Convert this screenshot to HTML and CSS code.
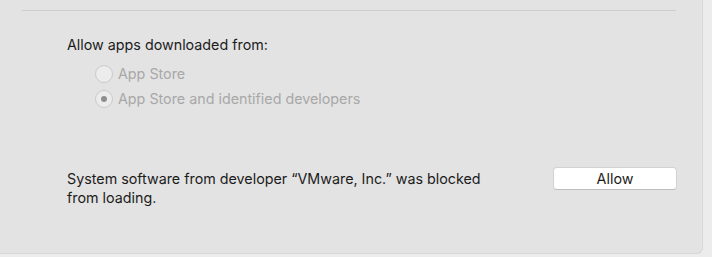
FILE: index.html
```
<!DOCTYPE html>
<html lang="en">
<head>
  <meta charset="UTF-8">
  <title>Security &amp; Privacy</title>
  <link rel="stylesheet" href="styles.css">
</head>
<body>
  <div class="panel">
    <div class="divider"></div>

    <div class="gatekeeper">
      <p class="label">Allow apps downloaded from:</p>
      <div class="radio-list">
        <label class="radio-row">
          <span class="radio"></span>
          <span>App Store</span>
        </label>
        <label class="radio-row">
          <span class="radio checked"></span>
          <span>App Store and identified developers</span>
        </label>
      </div>
    </div>

    <div class="blocked">
      <p class="blocked-text">System software from developer “VMware, Inc.” was blocked from loading.</p>
      <button class="allow-button">Allow</button>
    </div>
  </div>
</body>
</html>
```

FILE: styles.css
```
body {
  margin: 0;
  background-color: #ececec;
  font-family: Inter, "Liberation Sans", Arial, sans-serif;
  font-size: 14.3px;
  color: #1c1c1c;
}
.panel {
  width: 703px;
  height: 254px;
  background-color: #e3e3e3;
  border-right: 1px solid #d8d8d8;
  border-bottom: 1px solid #d8d8d8;
  border-bottom-right-radius: 6px;
  padding-top: 10px;
  box-sizing: border-box;
}
.divider {
  height: 1px;
  margin: 0 26px 0 22px;
  background-color: #cdcdcd;
}
.gatekeeper {
  padding: 25px 0 0 67px;
}
.label {
  margin: 0;
  line-height: 17px;
}
.radio-list {
  display: flex;
  flex-direction: column;
  padding: 8px 0 0 28px;
}
.radio-row {
  display: flex;
  align-items: center;
  gap: 5px;
  height: 25px;
  color: #a8a8a8;
}
.radio {
  width: 16px;
  height: 16px;
  border: 1px solid #cacaca;
  border-radius: 50%;
  background-color: #ececec;
  display: flex;
  align-items: center;
  justify-content: center;
}
.radio.checked::after {
  content: "";
  width: 6px;
  height: 6px;
  border-radius: 50%;
  background-color: #8e8e8e;
}
.blocked {
  display: flex;
  align-items: flex-start;
  padding: 58px 0 0 67px;
}
.blocked-text {
  margin: 0;
  width: 430px;
  line-height: 19px;
}
.allow-button {
  margin: -2px 0 0 56px;
  width: 124px;
  height: 23px;
  background-color: #ffffff;
  border: 1px solid #d2d2d2;
  border-bottom-color: #bdbdbd;
  border-radius: 4px;
  font-family: inherit;
  font-size: 14.3px;
  color: #1c1c1c;
  padding: 0;
}
```
